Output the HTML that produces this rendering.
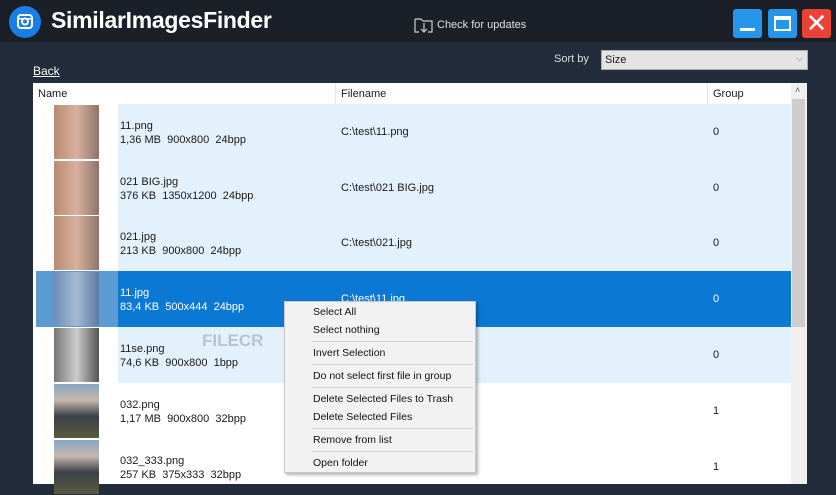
<!DOCTYPE html>
<html><head><style>
*{margin:0;padding:0;box-sizing:border-box}
body{width:836px;height:484px;background:#232c3a;font-family:"Liberation Sans",sans-serif;position:relative;overflow:hidden;font-size:11px;color:#1a1a1a}
.abs{position:absolute}
.title{left:0;top:0;width:836px;height:42px;background:#1a1f28}
.logo{left:9px;top:6px;width:32px;height:32px;border-radius:50%;background:#1a7ee6}
.tt{left:51px;top:7px;font-size:23px;font-weight:bold;color:#fff;letter-spacing:-0.3px}
.btn{top:9px;width:29px;height:29px;border-radius:3px}
.table{left:33px;top:83px;width:774px;height:401px;background:#fff}
.hdr{top:0;height:21px;left:0;width:758px;background:#fff;font-size:11px}
.row{left:3px;width:755px;height:56px}
.thumb{width:45px;height:54px;top:1px;left:18px}
.t1{font-size:11px;line-height:14px}
.menu{left:284px;top:301px;width:192px;height:172px;background:#f2f2f2;border:1px solid #c8c8c8;box-shadow:2px 2px 3px rgba(0,0,0,.3)}
.mi{position:absolute;left:28px;font-size:10.5px;color:#111}
.sep{position:absolute;left:27px;right:2px;height:1px;background:#d0d0d0}
</style></head><body>
<div class="abs title"></div>
<div class="abs logo"><svg width="32" height="32"><rect x="9" y="9" width="14" height="13" rx="3" fill="none" stroke="#fff" stroke-width="2"/><circle cx="16" cy="15.5" r="3" fill="none" stroke="#fff" stroke-width="2"/><rect x="9" y="12" width="14" height="1.5" fill="#fff"/></svg></div>
<div class="abs tt">SimilarImagesFinder</div>
<svg class="abs" style="left:414px;top:16px" width="20" height="18"><path d="M1 3v13h4M1 3h6l2 2h9v11h-4M10 7v9M7 13l3 3 3-3" fill="none" stroke="#ccc" stroke-width="1.2"/></svg>
<div class="abs" style="left:437px;top:19px;color:#e0e0e0;font-size:11px">Check for updates</div>
<div class="abs btn" style="left:733px;background:#2596ea"><div class="abs" style="left:7px;top:19px;width:15px;height:3px;background:#fff"></div></div>
<div class="abs btn" style="left:768px;background:#2596ea"><div class="abs" style="left:6px;top:7px;width:17px;height:15px;border:2px solid #fff;border-top-width:4px"></div></div>
<div class="abs btn" style="left:802px;background:#ea4335;color:#fff;font-size:26px;line-height:29px;text-align:center">✕</div>
<div class="abs" style="left:554px;top:53px;color:#ddd;font-size:11px">Sort by</div>
<div class="abs" style="left:601px;top:50px;width:207px;height:20px;background:#e4e4e4;border:1px solid #aaa;font-size:11px;padding:3px 3px">Size<span style="position:absolute;right:4px;top:2px;color:#777;font-size:9px">⌵</span></div>
<div class="abs" style="left:33px;top:64px;color:#fff;font-size:12px;text-decoration:underline">Back</div>
<div class="abs table">
 <div class="abs hdr">
  <span class="abs" style="left:5px;top:5px">Name</span>
  <div class="abs" style="left:302px;top:0;width:1px;height:21px;background:#e5e5e5"></div>
  <span class="abs" style="left:308px;top:5px">Filename</span>
  <div class="abs" style="left:674px;top:0;width:1px;height:21px;background:#e5e5e5"></div>
  <span class="abs" style="left:680px;top:5px">Group</span>
 </div>
 <div class="abs" style="left:758px;top:0;width:16px;height:401px;background:#f0f0f0"><div class="abs" style="left:1px;top:16px;width:13px;height:228px;background:#cdcdcd"></div><span class="abs" style="left:4px;top:2px;font-size:9px;color:#555">˄</span></div>

 <div class="abs row" style="top:21px"><div class="abs" style="left:82px;top:0;width:673px;height:56px;background:#e3f1fc"></div><div class="abs thumb" style="background:linear-gradient(90deg,#b98a72,#d8b2a0 50%,#8e7468)"></div><div class="abs t1" style="left:84px;top:15px">11.png<br>1,36 MB&nbsp; 900x800&nbsp; 24bpp</div><div class="abs t1" style="left:305px;top:21px">C:\test\11.png</div><div class="abs t1" style="left:677px;top:21px">0</div></div>
 <div class="abs row" style="top:77px"><div class="abs" style="left:82px;top:0;width:673px;height:56px;background:#e3f1fc"></div><div class="abs thumb" style="background:linear-gradient(90deg,#b98a72,#d8b2a0 50%,#8e7468)"></div><div class="abs t1" style="left:84px;top:15px">021 BIG.jpg<br>376 KB&nbsp; 1350x1200&nbsp; 24bpp</div><div class="abs t1" style="left:305px;top:21px">C:\test\021 BIG.jpg</div><div class="abs t1" style="left:677px;top:21px">0</div></div>
 <div class="abs row" style="top:132px"><div class="abs" style="left:82px;top:0;width:673px;height:56px;background:#e3f1fc"></div><div class="abs thumb" style="background:linear-gradient(90deg,#b98a72,#d8b2a0 50%,#8e7468)"></div><div class="abs t1" style="left:84px;top:15px">021.jpg<br>213 KB&nbsp; 900x800&nbsp; 24bpp</div><div class="abs t1" style="left:305px;top:21px">C:\test\021.jpg</div><div class="abs t1" style="left:677px;top:21px">0</div></div>
 <div class="abs row" style="top:188px;background:#0b78d4;color:#fff"><div class="abs" style="left:0;top:0;width:82px;height:56px;background:#5c9ad2"></div><div class="abs thumb" style="background:linear-gradient(90deg,#6d8eb8,#a6bad4 50%,#5b7aa2)"></div><div class="abs t1" style="left:84px;top:15px">11.jpg<br>83,4 KB&nbsp; 500x444&nbsp; 24bpp</div><div class="abs t1" style="left:305px;top:21px">C:\test\11.jpg</div><div class="abs t1" style="left:677px;top:21px">0</div></div>
 <div class="abs row" style="top:244px"><div class="abs" style="left:82px;top:0;width:673px;height:56px;background:#e3f1fc"></div><div class="abs thumb" style="background:linear-gradient(90deg,#777,#ccc 50%,#555)"></div><div class="abs t1" style="left:84px;top:15px">11se.png<br>74,6 KB&nbsp; 900x800&nbsp; 1bpp</div><div class="abs t1" style="left:677px;top:21px">0</div><div class="abs" style="left:166px;top:4px;font-size:17px;font-weight:bold;color:#b8c4cf">FILECR</div></div>
 <div class="abs row" style="top:300px"><div class="abs thumb" style="background:linear-gradient(180deg,#8aa6c4,#c6b8ae 30%,#3b4048 60%,#5a5a40)"></div><div class="abs t1" style="left:84px;top:15px">032.png<br>1,17 MB&nbsp; 900x800&nbsp; 32bpp</div><div class="abs t1" style="left:677px;top:21px">1</div></div>
 <div class="abs row" style="top:356px"><div class="abs thumb" style="background:linear-gradient(180deg,#8aa6c4,#c6b8ae 30%,#3b4048 60%,#5a5a40)"></div><div class="abs t1" style="left:84px;top:15px">032_333.png<br>257 KB&nbsp; 375x333&nbsp; 32bpp</div><div class="abs t1" style="left:677px;top:21px">1</div></div>
</div>
<div class="abs menu">
 <div class="mi" style="top:4px">Select All</div>
 <div class="mi" style="top:22px">Select nothing</div>
 <div class="sep" style="top:39px"></div>
 <div class="mi" style="top:45px">Invert Selection</div>
 <div class="sep" style="top:62px"></div>
 <div class="mi" style="top:68px">Do not select first file in group</div>
 <div class="sep" style="top:85px"></div>
 <div class="mi" style="top:91px">Delete Selected Files to Trash</div>
 <div class="mi" style="top:109px">Delete Selected Files</div>
 <div class="sep" style="top:126px"></div>
 <div class="mi" style="top:132px">Remove from list</div>
 <div class="sep" style="top:149px"></div>
 <div class="mi" style="top:155px">Open folder</div>
</div>
</body></html>
